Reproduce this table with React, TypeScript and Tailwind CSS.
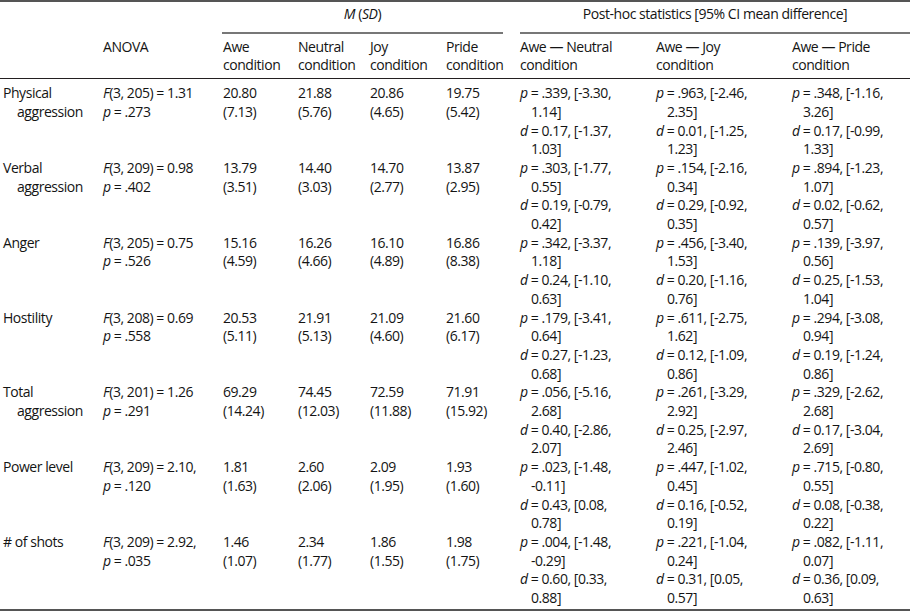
import React from "react";

type Row = {
  label: [string, string?];
  f: string;
  p: string;
  means: [string, string][];
  post: { p: [string, string]; d: [string, string] }[];
};

const rows: Row[] = [
  {
    label: ["Physical", "aggression"],
    f: "(3, 205) = 1.31",
    p: " = .273",
    means: [["20.80", "(7.13)"], ["21.88", "(5.76)"], ["20.86", "(4.65)"], ["19.75", "(5.42)"]],
    post: [
      { p: [" = .339, [-3.30,", "1.14]"], d: [" = 0.17, [-1.37,", "1.03]"] },
      { p: [" = .963, [-2.46,", "2.35]"], d: [" = 0.01, [-1.25,", "1.23]"] },
      { p: [" = .348, [-1.16,", "3.26]"], d: [" = 0.17, [-0.99,", "1.33]"] },
    ],
  },
  {
    label: ["Verbal", "aggression"],
    f: "(3, 209) = 0.98",
    p: " = .402",
    means: [["13.79", "(3.51)"], ["14.40", "(3.03)"], ["14.70", "(2.77)"], ["13.87", "(2.95)"]],
    post: [
      { p: [" = .303, [-1.77,", "0.55]"], d: [" = 0.19, [-0.79,", "0.42]"] },
      { p: [" = .154, [-2.16,", "0.34]"], d: [" = 0.29, [-0.92,", "0.35]"] },
      { p: [" = .894, [-1.23,", "1.07]"], d: [" = 0.02, [-0.62,", "0.57]"] },
    ],
  },
  {
    label: ["Anger"],
    f: "(3, 205) = 0.75",
    p: " = .526",
    means: [["15.16", "(4.59)"], ["16.26", "(4.66)"], ["16.10", "(4.89)"], ["16.86", "(8.38)"]],
    post: [
      { p: [" = .342, [-3.37,", "1.18]"], d: [" = 0.24, [-1.10,", "0.63]"] },
      { p: [" = .456, [-3.40,", "1.53]"], d: [" = 0.20, [-1.16,", "0.76]"] },
      { p: [" = .139, [-3.97,", "0.56]"], d: [" = 0.25, [-1.53,", "1.04]"] },
    ],
  },
  {
    label: ["Hostility"],
    f: "(3, 208) = 0.69",
    p: " = .558",
    means: [["20.53", "(5.11)"], ["21.91", "(5.13)"], ["21.09", "(4.60)"], ["21.60", "(6.17)"]],
    post: [
      { p: [" = .179, [-3.41,", "0.64]"], d: [" = 0.27, [-1.23,", "0.68]"] },
      { p: [" = .611, [-2.75,", "1.62]"], d: [" = 0.12, [-1.09,", "0.86]"] },
      { p: [" = .294, [-3.08,", "0.94]"], d: [" = 0.19, [-1.24,", "0.86]"] },
    ],
  },
  {
    label: ["Total", "aggression"],
    f: "(3, 201) = 1.26",
    p: " = .291",
    means: [["69.29", "(14.24)"], ["74.45", "(12.03)"], ["72.59", "(11.88)"], ["71.91", "(15.92)"]],
    post: [
      { p: [" = .056, [-5.16,", "2.68]"], d: [" = 0.40, [-2.86,", "2.07]"] },
      { p: [" = .261, [-3.29,", "2.92]"], d: [" = 0.25, [-2.97,", "2.46]"] },
      { p: [" = .329, [-2.62,", "2.68]"], d: [" = 0.17, [-3.04,", "2.69]"] },
    ],
  },
  {
    label: ["Power level"],
    f: "(3, 209) = 2.10,",
    p: " = .120",
    means: [["1.81", "(1.63)"], ["2.60", "(2.06)"], ["2.09", "(1.95)"], ["1.93", "(1.60)"]],
    post: [
      { p: [" = .023, [-1.48,", "-0.11]"], d: [" = 0.43, [0.08,", "0.78]"] },
      { p: [" = .447, [-1.02,", "0.45]"], d: [" = 0.16, [-0.52,", "0.19]"] },
      { p: [" = .715, [-0.80,", "0.55]"], d: [" = 0.08, [-0.38,", "0.22]"] },
    ],
  },
  {
    label: ["# of shots"],
    f: "(3, 209) = 2.92,",
    p: " = .035",
    means: [["1.46", "(1.07)"], ["2.34", "(1.77)"], ["1.86", "(1.55)"], ["1.98", "(1.75)"]],
    post: [
      { p: [" = .004, [-1.48,", "-0.29]"], d: [" = 0.60, [0.33,", "0.88]"] },
      { p: [" = .221, [-1.04,", "0.24]"], d: [" = 0.31, [0.05,", "0.57]"] },
      { p: [" = .082, [-1.11,", "0.07]"], d: [" = 0.36, [0.09,", "0.63]"] },
    ],
  },
];

const GRID =
  "grid grid-cols-[103px_120px_75px_72px_76px_74px_136px_136px_118px]";

function Stat({ sym, lines }: { sym: string; lines: [string, string] }) {
  return (
    <>
      <div className="whitespace-nowrap">
        <i>{sym}</i>
        {lines[0]}
      </div>
      <div className="pl-[11px]">{lines[1]}</div>
    </>
  );
}

export default function App() {
  return (
    <div
      className="w-[910px] bg-white text-[#141414] text-[14px] tracking-[-0.45px] leading-[18.7px]"
      style={{ fontFamily: '"Open Sans", "Liberation Sans", sans-serif' }}
    >
      <div className="border-t-2 border-b-2 border-[#555]">
        {/* Header */}
        <div className={`${GRID} border-b border-[#231f20]`}>
          <div className="col-span-2" />
          <div className="col-span-4 mr-[17px] -ml-px pt-[3px] pb-[8px] border-b-2 border-[#777] text-center">
            <i>M</i> (<i>SD</i>)
          </div>
          <div className="col-span-3 pt-[3px] pb-[8px] border-b-2 border-[#777] text-center">
            Post-hoc statistics [95% CI mean difference]
          </div>

          <div className="pt-[4px] pb-[3px]" />
          <div className="pt-[4px] pb-[3px]">ANOVA</div>
          {["Awe", "Neutral", "Joy", "Pride"].map((c) => (
            <div key={c} className="pt-[4px] pb-[3px]">
              <div>{c}</div>
              <div>condition</div>
            </div>
          ))}
          {["Awe — Neutral", "Awe — Joy", "Awe — Pride"].map((c) => (
            <div key={c} className="pt-[4px] pb-[3px]">
              <div>{c}</div>
              <div>condition</div>
            </div>
          ))}
        </div>

        {/* Body */}
        <div className="pt-[5px] pb-[1px]">
          {rows.map((r) => (
            <div key={r.label[0]} className={`${GRID} h-[74.8px]`}>
              <div className="pl-[3px]">
                <div>{r.label[0]}</div>
                {r.label[1] && <div className="pl-[14px]">{r.label[1]}</div>}
              </div>
              <div className="whitespace-nowrap">
                <div>
                  <i>F</i>
                  {r.f}
                </div>
                <div>
                  <i>p</i>
                  {r.p}
                </div>
              </div>
              {r.means.map((m, i) => (
                <div key={i}>
                  <div>{m[0]}</div>
                  <div>{m[1]}</div>
                </div>
              ))}
              {r.post.map((s, i) => (
                <div key={i}>
                  <Stat sym="p" lines={s.p} />
                  <Stat sym="d" lines={s.d} />
                </div>
              ))}
            </div>
          ))}
        </div>
      </div>
    </div>
  );
}
